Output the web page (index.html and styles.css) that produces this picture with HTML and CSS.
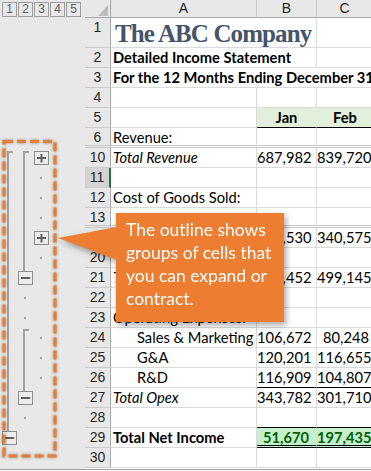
FILE: index.html
```html
<!DOCTYPE html>
<html lang="en">
<head>
    <meta charset="UTF-8">
    <meta name="viewport" content="width=device-width, initial-scale=1.0">
    <title>Outline Groups</title>
    <link rel="stylesheet" href="styles.css">
</head>
<body>
    <div class="app">
        <div class="outline">
            <div class="levels">
                <span>1</span><span>2</span><span>3</span><span>4</span><span>5</span>
            </div>
            <svg class="gutter" width="85" height="452" viewBox="0 18 85 452">
                <g fill="none" stroke="#a3a3a3" stroke-width="2">
                    <path d="M13 152H8V432"/>
                    <path d="M29 152H24V272"/>
                    <path d="M29 330H24V392"/>
                </g>
                <g fill="#a3a3a3">
                    <rect x="40" y="177" width="2" height="2"/>
                    <rect x="40" y="197" width="2" height="2"/>
                    <rect x="40" y="217" width="2" height="2"/>
                    <rect x="40" y="257" width="2" height="2"/>
                    <rect x="24" y="297" width="2" height="2"/>
                    <rect x="24" y="317" width="2" height="2"/>
                    <rect x="40" y="337" width="2" height="2"/>
                    <rect x="40" y="357" width="2" height="2"/>
                    <rect x="40" y="377" width="2" height="2"/>
                    <rect x="24" y="417" width="2" height="2"/>
                </g>
                <g fill="#ececec" stroke="#8d8d8d" stroke-width="1">
                    <rect x="34.5" y="151.5" width="14" height="13"/>
                    <rect x="34.5" y="231.5" width="14" height="13"/>
                    <rect x="18.5" y="271.5" width="14" height="13"/>
                    <rect x="18.5" y="391.5" width="14" height="13"/>
                    <rect x="2.5" y="431.5" width="14" height="13"/>
                </g>
                <g stroke="#606060" stroke-width="2">
                    <path d="M37 158H46M41.5 154V162.5"/>
                    <path d="M37 238H46M41.5 234V242.5"/>
                    <path d="M21 278H30"/>
                    <path d="M21 398H30"/>
                    <path d="M5 438H14"/>
                </g>
            </svg>
        </div>

        <div class="sheet">
            <div class="row head">
                <div class="rh corner"><i class="tri"></i></div>
                <div class="ch">A</div>
                <div class="ch">B</div>
                <div class="ch">C</div>
            </div>
            <div class="row tall">
                <div class="rh">1</div>
                <div class="cell title span2">The ABC Company</div>
                <div class="cell"></div>
            </div>
            <div class="row">
                <div class="rh">2</div>
                <div class="cell b span2">Detailed Income Statement</div>
                <div class="cell"></div>
            </div>
            <div class="row">
                <div class="rh">3</div>
                <div class="cell b span3">For the 12 Months Ending December 31, 2016</div>
            </div>
            <div class="row">
                <div class="rh">4</div>
                <div class="cell"></div><div class="cell"></div><div class="cell"></div>
            </div>
            <div class="row">
                <div class="rh">5</div>
                <div class="cell"></div>
                <div class="cell mon">Jan</div>
                <div class="cell mon">Feb</div>
            </div>
            <div class="row gap">
                <div class="rh">6</div>
                <div class="cell">Revenue:</div><div class="cell"></div><div class="cell"></div>
            </div>
            <div class="row">
                <div class="rh">10</div>
                <div class="cell it">Total Revenue</div>
                <div class="cell num">687,982</div>
                <div class="cell num">839,720</div>
            </div>
            <div class="row">
                <div class="rh sel">11</div>
                <div class="cell"></div><div class="cell"></div><div class="cell"></div>
            </div>
            <div class="row">
                <div class="rh">12</div>
                <div class="cell">Cost of Goods Sold:</div><div class="cell"></div><div class="cell"></div>
            </div>
            <div class="row gap">
                <div class="rh">13</div>
                <div class="cell"></div><div class="cell"></div><div class="cell"></div>
            </div>
            <div class="row">
                <div class="rh">19</div>
                <div class="cell it">Total COGS</div>
                <div class="cell num">292,530</div>
                <div class="cell num">340,575</div>
            </div>
            <div class="row">
                <div class="rh">20</div>
                <div class="cell"></div><div class="cell"></div><div class="cell"></div>
            </div>
            <div class="row">
                <div class="rh">21</div>
                <div class="cell it">Total Gross Profit</div>
                <div class="cell num">395,452</div>
                <div class="cell num">499,145</div>
            </div>
            <div class="row">
                <div class="rh">22</div>
                <div class="cell"></div><div class="cell"></div><div class="cell"></div>
            </div>
            <div class="row">
                <div class="rh">23</div>
                <div class="cell">Operating Expenses:</div><div class="cell"></div><div class="cell"></div>
            </div>
            <div class="row">
                <div class="rh">24</div>
                <div class="cell ind">Sales &amp; Marketing</div>
                <div class="cell num">106,672</div>
                <div class="cell num">80,248</div>
            </div>
            <div class="row">
                <div class="rh">25</div>
                <div class="cell ind">G&amp;A</div>
                <div class="cell num">120,201</div>
                <div class="cell num">116,655</div>
            </div>
            <div class="row">
                <div class="rh">26</div>
                <div class="cell ind">R&amp;D</div>
                <div class="cell num line">116,909</div>
                <div class="cell num line">104,807</div>
            </div>
            <div class="row">
                <div class="rh">27</div>
                <div class="cell it">Total Opex</div>
                <div class="cell num">343,782</div>
                <div class="cell num">301,710</div>
            </div>
            <div class="row">
                <div class="rh">28</div>
                <div class="cell"></div><div class="cell line"></div><div class="cell line"></div>
            </div>
            <div class="row">
                <div class="rh">29</div>
                <div class="cell b">Total Net Income</div>
                <div class="cell num good">51,670</div>
                <div class="cell num good">197,435</div>
            </div>
            <div class="row">
                <div class="rh">30</div>
                <div class="cell"></div><div class="cell"></div><div class="cell"></div>
            </div>
        </div>
    </div>

    <!-- highlight round the outline symbols -->
    <svg class="focus" width="60" height="471">
        <rect x="4" y="141.5" width="51" height="314.5" fill="none" stroke="#ed7d31" stroke-width="3" stroke-dasharray="9 4"/>
    </svg>

    <div class="callout">The outline shows<br>groups of cells that<br>you can expand or<br>contract.</div>
</body>
</html>
```

FILE: styles.css
```css
body {
    margin: 0;
    width: 371px;
    height: 471px;
    overflow: hidden;
    background-color: #fff;
    font-family: Lato, "Liberation Sans", sans-serif;
    position: relative;
}
.app {
    display: flex;
    width: 371px;
    height: 470px;
    overflow: hidden;
    border-bottom: 1px solid #a0a0a0;
    box-sizing: border-box;
    background-color: #e8e8e8;
}
.outline {
    flex: none;
    width: 85px;
}
.levels {
    display: flex;
    gap: 1px;
    height: 18px;
    padding: 2px 0 0 2px;
    box-sizing: border-box;
}
.levels span {
    width: 15px;
    height: 15px;
    box-sizing: border-box;
    border: 1px solid #9d9d9d;
    font: 12px/13px "Liberation Sans", sans-serif;
    color: #606060;
    text-align: center;
}
.gutter {
    display: block;
}
.sheet {
    flex: none;
    width: 289px;
    background-color: #fff;
}
.row {
    display: grid;
    grid-template-columns: 26px 146px 60px 57px;
    height: 20px;
}
.row.head {
    height: 18px;
}
.row.tall {
    height: 30px;
}
.row > div {
    box-sizing: border-box;
    white-space: nowrap;
    overflow: hidden;
}
.rh {
    background-color: #e8e8e8;
    border-right: 1px solid #a9a9a9;
    border-bottom: 1px solid #cbcbcb;
    font: 14px/19px "Liberation Sans", sans-serif;
    color: #262626;
    text-align: center;
}
.rh.sel {
    background-color: #d3d3d3;
    border-right: 2px solid #217346;
}
.rh.corner {
    display: flex;
    justify-content: flex-end;
    align-items: flex-end;
    padding: 0 2px 1px 0;
    border-bottom-color: #a9a9a9;
}
.tri {
    width: 10px;
    height: 11px;
    background-color: #bdbdbd;
    clip-path: polygon(100% 0, 100% 100%, 0 100%);
}
.ch {
    background-color: #e8e8e8;
    border-right: 1px solid #cbcbcb;
    border-bottom: 1px solid #a9a9a9;
    font: 14px/17px "Liberation Sans", sans-serif;
    color: #262626;
    text-align: center;
}
.ch:last-child {
    padding-right: 1px;
}
.cell {
    border-right: 1px solid #dadada;
    border-bottom: 1px solid #dadada;
    padding: 0 2px;
    font-size: 14.7px;
    line-height: 19px;
    color: #000;
}
.span2 {
    grid-column: span 2;
}
.span3 {
    grid-column: span 3;
}
.title {
    font: bold 25px/27px "Liberation Serif", serif;
    letter-spacing: -0.9px;
    color: #44546a;
    padding-top: 2px;
    padding-left: 4px;
}
.b {
    font-weight: bold;
}
.it {
    font-style: italic;
}
.ind {
    padding-left: 26px;
}
.num {
    text-align: right;
    padding-left: 0;
    padding-right: 7px;
}
.row > .num:last-child {
    padding-right: 4px;
}
.mon {
    background-color: #e2efda;
    border-right-color: #e2efda;
    border-bottom-color: #000;
    font-weight: bold;
    text-align: center;
}
.line {
    border-bottom-color: #000;
}
.good {
    background-color: #c6efce;
    border-right-color: #c6efce;
    border-bottom: 3px double #000;
    color: #006100;
    font-weight: bold;
}
.row.gap > div {
    border-bottom: 3px double #c8c8c8;
}
.focus {
    position: absolute;
    left: 0;
    top: 0;
    filter: drop-shadow(0 0 1.5px rgba(0, 0, 0, 0.45));
}
.callout {
    position: absolute;
    left: 116px;
    top: 213px;
    width: 168px;
    height: 109px;
    box-sizing: border-box;
    padding: 5px 0 0 10px;
    background-color: #ed7d31;
    color: #fff;
    font-size: 17.5px;
    line-height: 23px;
    filter: drop-shadow(2px 3px 3px rgba(0, 0, 0, 0.35));
}
.callout::before {
    content: "";
    position: absolute;
    left: -58px;
    top: 14px;
    width: 59px;
    height: 33px;
    background-color: #ed7d31;
    clip-path: polygon(0 11px, 100% 0, 100% 100%);
}
```
